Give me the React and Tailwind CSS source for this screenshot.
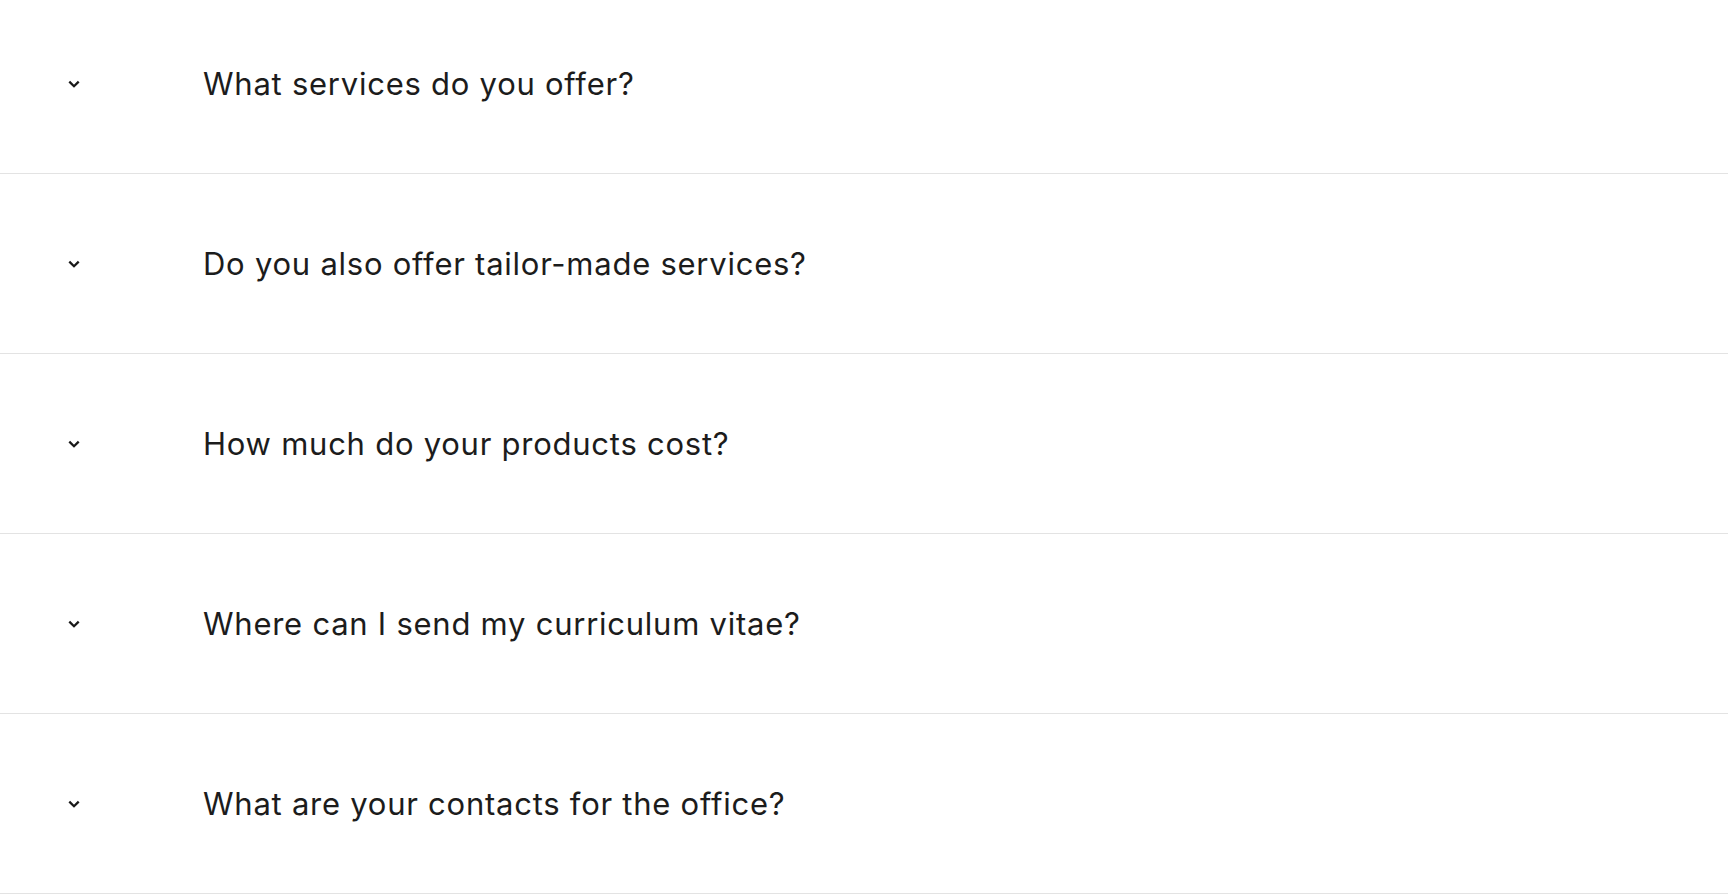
const questions = [
  "What services do you offer?",
  "Do you also offer tailor-made services?",
  "How much do your products cost?",
  "Where can I send my curriculum vitae?",
  "What are your contacts for the office?",
];

function Chevron() {
  return (
    <svg width="12" height="8" viewBox="0 0 12 8" fill="none" className="text-[#1a1a1a]">
      <path d="M1.3 1.6L6 6.2L10.7 1.6" stroke="currentColor" strokeWidth="2.3" />
    </svg>
  );
}

export default function App() {
  return (
    <div className="bg-white w-full min-h-screen overflow-hidden font-['Inter',sans-serif]">
      <div className="-mt-[6px]">
        {questions.map((q) => (
          <button
            key={q}
            type="button"
            className="w-full h-[180px] flex items-center border-b border-[#e3e3e3] text-left"
          >
            <span className="w-[203px] shrink-0 flex justify-start pl-[68px]">
              <Chevron />
            </span>
            <span className="text-[31px] leading-none tracking-[0.75px] text-[#1c1c1c]">{q}</span>
          </button>
        ))}
      </div>
    </div>
  );
}
